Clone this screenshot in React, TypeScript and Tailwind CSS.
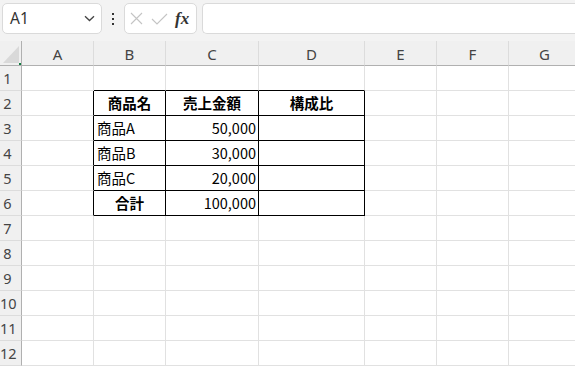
import React from "react";

const COLS = ["A", "B", "C", "D", "E", "F", "G"];
const ROWS = [1, 2, 3, 4, 5, 6, 7, 8, 9, 10, 11, 12];

type Cell = { text: string; align: "left" | "right" | "center"; bold?: boolean };

const DATA: Record<string, Cell> = {
  "2B": { text: "商品名", align: "center", bold: true },
  "2C": { text: "売上金額", align: "center", bold: true },
  "2D": { text: "構成比", align: "center", bold: true },
  "3B": { text: "商品A", align: "left" },
  "3C": { text: "50,000", align: "right" },
  "4B": { text: "商品B", align: "left" },
  "4C": { text: "30,000", align: "right" },
  "5B": { text: "商品C", align: "left" },
  "5C": { text: "20,000", align: "right" },
  "6B": { text: "合計", align: "center", bold: true },
  "6C": { text: "100,000", align: "right" },
};

const inTable = (r: number, c: string) => r >= 2 && r <= 6 && ["B", "C", "D"].includes(c);

function BodyCell({ r, c }: { r: number; c: string }) {
  const cell = DATA[`${r}${c}`];
  const rightBlack = inTable(r, c) || (c === "A" && r >= 2 && r <= 6);
  const bottomBlack = inTable(r, c) || (r === 1 && ["B", "C", "D"].includes(c));
  const alignCls =
    cell?.align === "right"
      ? "justify-end pr-[2px]"
      : cell?.align === "center"
      ? "justify-center"
      : "justify-start pl-[3px]";
  return (
    <div
      className={`flex items-center bg-white border-r border-b text-[14.5px] leading-none text-black ${alignCls} ${
        rightBlack ? "border-r-black" : "border-r-[#e1e1e1]"
      } ${bottomBlack ? "border-b-black" : "border-b-[#e1e1e1]"} ${cell?.bold ? "font-bold" : "font-normal"}`}
      style={{ fontFamily: '"Noto Sans CJK JP", "Noto Sans", sans-serif' }}
    >
      {cell ? <span className="pt-[1px]">{cell.text}</span> : null}
    </div>
  );
}

export default function App() {
  return (
    <div className="w-[575px] h-[366px] overflow-hidden bg-[#f3f3f3] flex flex-col" style={{ fontFamily: '"Noto Sans", sans-serif' }}>
      {/* toolbar */}
      <div className="h-[41px] shrink-0 flex items-start pt-[3px] pl-[2px] gap-0">
        <div className="w-[100px] h-[31px] bg-white border border-[#dadada] rounded-[5px] flex items-center justify-between pl-[7px] pr-[6px]">
          <span className="text-[15.5px] text-[#333] leading-none">A1</span>
          <svg width="11" height="7" viewBox="0 0 11 7" fill="none">
            <path d="M1 1.2 L5.5 5.5 L10 1.2" stroke="#444" strokeWidth="1.3" />
          </svg>
        </div>
        <div className="w-[22px] h-[31px] flex flex-col items-center justify-center gap-[3px]">
          <span className="w-[2px] h-[2px] bg-[#333] block" />
          <span className="w-[2px] h-[2px] bg-[#333] block" />
          <span className="w-[2px] h-[2px] bg-[#333] block" />
        </div>
        <div className="w-[73px] h-[31px] bg-white border border-[#dadada] rounded-[5px] flex items-center pl-[5px] gap-[8px]">
          <svg width="13" height="13" viewBox="0 0 13 13" fill="none">
            <path d="M1 1 L12 12 M12 1 L1 12" stroke="#c4c4c4" strokeWidth="1.1" />
          </svg>
          <svg width="17" height="12" viewBox="0 0 17 12" fill="none">
            <path d="M1 6 L6 11 L16 1" stroke="#c4c4c4" strokeWidth="1.1" />
          </svg>
          <span
            className="italic text-[17px] leading-none text-[#333] font-bold -ml-[1px]"
            style={{ fontFamily: '"Liberation Serif", "DejaVu Serif", serif' }}
          >
            fx
          </span>
        </div>
        <div className="ml-[5px] flex-1 h-[31px] bg-white border border-[#dadada] border-r-0 rounded-l-[5px]" />
      </div>

      {/* grid */}
      <div className="grid grid-cols-[22px_72px_72px_93px_106px_72px_72px_72px] grid-rows-[repeat(13,25px)] w-[581px]">
        {/* corner */}
        <div className="relative bg-[#f0f0f0] border-r border-b border-r-[#b0b0b0] border-b-[#b0b0b0] flex items-end justify-start pl-[3px] pb-[2px]">
          <svg width="16" height="17" viewBox="0 0 16 17">
            <path d="M16 0 L16 17 L0 17 Z" fill="#d9d9d9" />
          </svg>
          <span className="absolute right-0 bottom-0 w-[2px] h-[2px] bg-[#107c41]" />
        </div>
        {COLS.map((c) => (
          <div
            key={c}
            className="bg-[#f0f0f0] border-r border-b border-r-[#dcdcdc] border-b-[#b0b0b0] flex items-center justify-center text-[15px] text-[#444] leading-none"
          >
            <span className="pt-[2px]">{c}</span>
          </div>
        ))}
        {ROWS.map((r) => (
          <React.Fragment key={r}>
            <div className="bg-[#f0f0f0] border-r border-b border-r-[#b0b0b0] border-b-[#dcdcdc] flex items-center">
              <span className="w-[15px] text-center text-[14.5px] text-[#444] leading-none pt-[1px]">{r}</span>
            </div>
            {COLS.map((c) => (
              <BodyCell key={c} r={r} c={c} />
            ))}
          </React.Fragment>
        ))}
      </div>
    </div>
  );
}
